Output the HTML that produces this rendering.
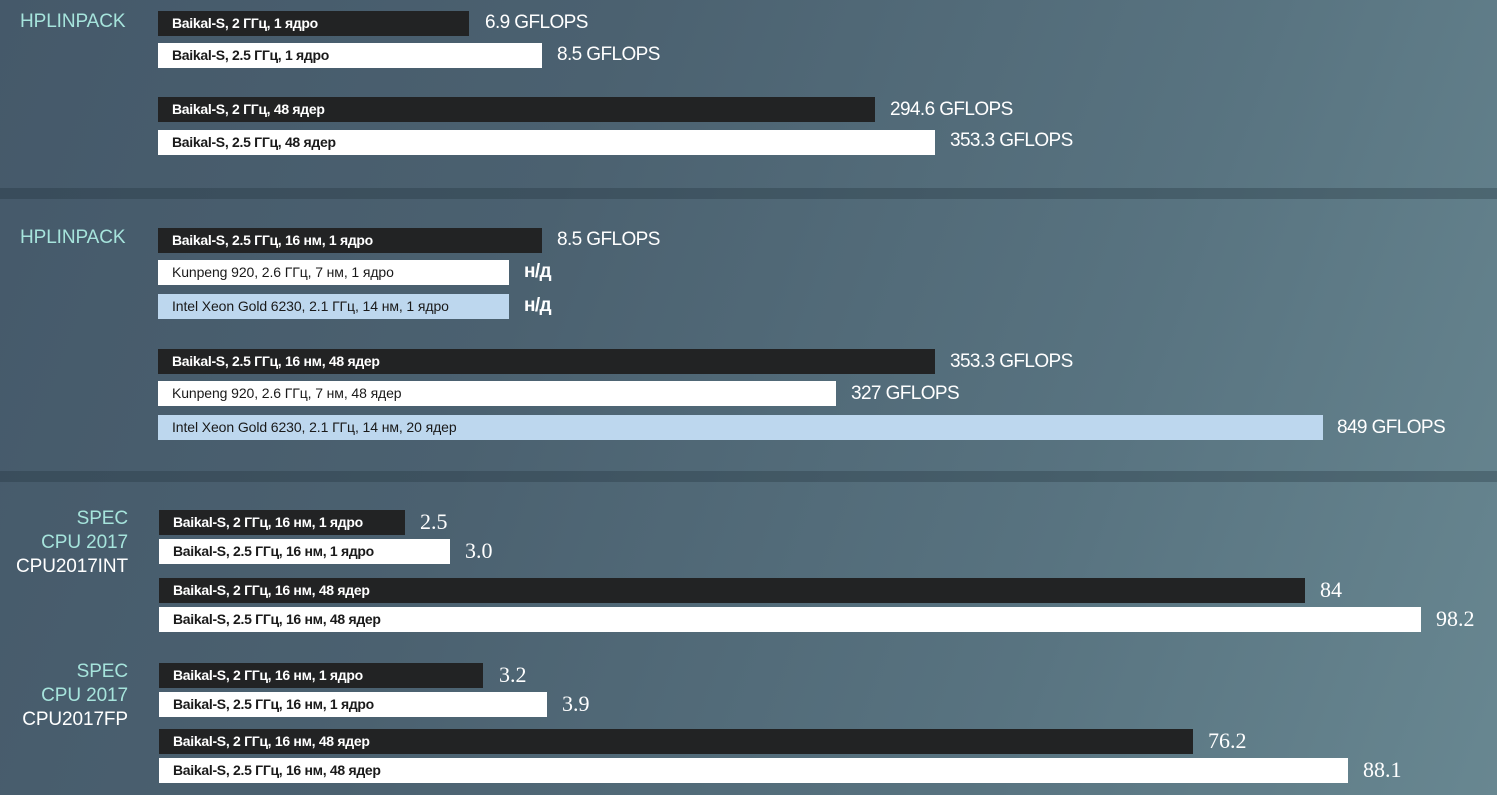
<!DOCTYPE html>
<html><head><meta charset="utf-8"><style>
html,body{margin:0;padding:0}
body{width:1497px;height:795px;overflow:hidden;position:relative;
background:linear-gradient(110deg,#45596a 0%,#4b6170 35%,#587380 70%,#688791 100%);
font-family:"Liberation Sans",sans-serif}
.sep{position:absolute;left:0;width:1497px;height:11px;background:rgba(30,45,55,0.3)}
.b{position:absolute;height:25px;box-sizing:border-box;padding-left:14px;font-size:14px;font-weight:bold;line-height:25px;letter-spacing:-0.3px;white-space:nowrap}
.d{background:#222324;color:#fff}
.w{background:#fff;color:#1a1a1a}
.l{background:#bdd7ee;color:#1a1a1a}
.n{font-weight:normal;letter-spacing:-0.1px}
.v{position:absolute;color:#fff;font-size:19px;line-height:25px;letter-spacing:-0.6px;white-space:nowrap}
.s{font-family:"Liberation Serif",serif;font-size:22px;letter-spacing:0}
.t{position:absolute;font-size:19px;color:#a6e4dc;letter-spacing:-0.1px;line-height:24px}
.r{text-align:right;width:128px;left:0}
.wt{color:#fff}
</style></head><body>
<div class="sep" style="top:188px"></div>
<div class="sep" style="top:471px"></div>

<div class="t" style="left:20px;top:10px">HPLINPACK</div>
<div class="b d" style="left:158px;top:11px;width:311px">Baikal-S, 2 ГГц, 1 ядро</div><div class="v" style="left:485px;top:10px">6.9 GFLOPS</div>
<div class="b w" style="left:158px;top:43px;width:384px">Baikal-S, 2.5 ГГц, 1 ядро</div><div class="v" style="left:557px;top:42px">8.5 GFLOPS</div>
<div class="b d" style="left:158px;top:97px;width:717px">Baikal-S, 2 ГГц, 48 ядер</div><div class="v" style="left:890px;top:97px">294.6 GFLOPS</div>
<div class="b w" style="left:158px;top:130px;width:777px">Baikal-S, 2.5 ГГц, 48 ядер</div><div class="v" style="left:950px;top:128px">353.3 GFLOPS</div>

<div class="t" style="left:20px;top:226px">HPLINPACK</div>
<div class="b d" style="left:158px;top:228px;width:384px">Baikal-S, 2.5 ГГц, 16 нм, 1 ядро</div><div class="v" style="left:557px;top:227px">8.5 GFLOPS</div>
<div class="b w n" style="left:158px;top:260px;width:351px">Kunpeng 920, 2.6 ГГц, 7 нм, 1 ядро</div><div class="v" style="left:524px;top:259px;font-weight:bold">н/д</div>
<div class="b l n" style="left:158px;top:294px;width:351px">Intel Xeon Gold 6230, 2.1 ГГц, 14 нм, 1 ядро</div><div class="v" style="left:524px;top:293px;font-weight:bold">н/д</div>
<div class="b d" style="left:158px;top:349px;width:777px">Baikal-S, 2.5 ГГц, 16 нм, 48 ядер</div><div class="v" style="left:950px;top:349px">353.3 GFLOPS</div>
<div class="b w n" style="left:158px;top:381px;width:678px">Kunpeng 920, 2.6 ГГц, 7 нм, 48 ядер</div><div class="v" style="left:851px;top:381px">327 GFLOPS</div>
<div class="b l n" style="left:158px;top:415px;width:1165px">Intel Xeon Gold 6230, 2.1 ГГц, 14 нм, 20 ядер</div><div class="v" style="left:1337px;top:415px">849 GFLOPS</div>

<div class="t r" style="top:507px">SPEC<br>CPU 2017<br><span class="wt">CPU2017INT</span></div>
<div class="b d" style="left:159px;top:510px;width:246px">Baikal-S, 2 ГГц, 16 нм, 1 ядро</div><div class="v s" style="left:420px;top:509px">2.5</div>
<div class="b w" style="left:159px;top:539px;width:291px">Baikal-S, 2.5 ГГц, 16 нм, 1 ядро</div><div class="v s" style="left:465px;top:538px">3.0</div>
<div class="b d" style="left:159px;top:578px;width:1146px">Baikal-S, 2 ГГц, 16 нм, 48 ядер</div><div class="v s" style="left:1320px;top:577px">84</div>
<div class="b w" style="left:159px;top:607px;width:1262px">Baikal-S, 2.5 ГГц, 16 нм, 48 ядер</div><div class="v s" style="left:1436px;top:606px">98.2</div>

<div class="t r" style="top:660px">SPEC<br>CPU 2017<br><span class="wt">CPU2017FP</span></div>
<div class="b d" style="left:159px;top:663px;width:324px">Baikal-S, 2 ГГц, 16 нм, 1 ядро</div><div class="v s" style="left:499px;top:662px">3.2</div>
<div class="b w" style="left:159px;top:692px;width:388px">Baikal-S, 2.5 ГГц, 16 нм, 1 ядро</div><div class="v s" style="left:562px;top:691px">3.9</div>
<div class="b d" style="left:159px;top:729px;width:1034px">Baikal-S, 2 ГГц, 16 нм, 48 ядер</div><div class="v s" style="left:1208px;top:728px">76.2</div>
<div class="b w" style="left:159px;top:758px;width:1189px">Baikal-S, 2.5 ГГц, 16 нм, 48 ядер</div><div class="v s" style="left:1363px;top:757px">88.1</div>
</body></html>
